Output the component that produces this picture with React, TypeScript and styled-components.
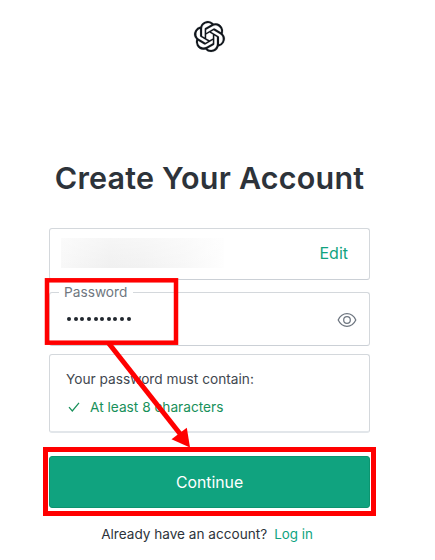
import React from 'react';
import styled, { createGlobalStyle } from 'styled-components';
import { SiOpenai } from 'react-icons/si';

const GlobalStyle = createGlobalStyle`
  * { box-sizing: border-box; }
  body { margin: 0; background: #fff; overflow: hidden; font-family: Inter, Arial, sans-serif; }
`;

const Page = styled.main`
  position: relative;
  width: 435px;
  height: 560px;
  padding: 21px 65px 0 49px;
  display: flex;
  flex-direction: column;
  align-items: stretch;
  color: #2d333a;
`;

const Logo = styled(SiOpenai)`
  align-self: center;
  width: 31px;
  height: 31px;
  color: #11161c;
  overflow: visible;

  path {
    stroke: currentColor;
    stroke-width: 0.1;
  }
`;

const Title = styled.h1`
  margin: 106px -10px 0;
  height: 40px;
  line-height: 40px;
  font-size: 30.5px;
  font-weight: 600;
  letter-spacing: 0.2px;
  text-align: center;
  white-space: nowrap;
`;

const Panel = styled.div`
  border: 1px solid #d4d8dc;
  border-bottom-color: #cbd0d6;
  border-radius: 3px;
`;

const EmailField = styled(Panel)`
  display: flex;
  align-items: center;
  justify-content: space-between;
  height: 52px;
  margin-top: 30px;
  padding: 0 21px 2px 11px;
`;

const HiddenAddress = styled.div`
  width: 163px;
  height: 30px;
  margin-top: -1px;
  background:
    linear-gradient(180deg, rgba(255, 255, 255, 0.4), rgba(255, 255, 255, 0)),
    linear-gradient(90deg, #f8f8f8, #f0f0f0 30%, #f2f2f2 50%, #f7f7f7 75%, #fefefe);
`;

const Link = styled.a<{ $size: number }>`
  color: #10a37f;
  font-size: ${(p) => p.$size}px;
`;

const PasswordField = styled.fieldset`
  display: flex;
  align-items: center;
  justify-content: space-between;
  min-width: 0;
  height: 62px;
  margin: 4px 0 0;
  padding: 6px 12px 0 17px;
  border: 1px solid #d4d8dc;
  border-bottom-color: #cbd0d6;
  border-radius: 3px;
`;

const Legend = styled.legend`
  margin-left: -8px;
  padding: 0 6px 0 5px;
  height: 16px;
  line-height: 16px;
  font-size: 13.7px;
  color: #6f7780;
`;

const Dots = styled.div`
  display: flex;
  gap: 2.65px;
  margin-top: 3px;
`;

const Dot = styled.i`
  width: 4px;
  height: 4px;
  border-radius: 50%;
  background: #20262e;
`;

const EyeIcon = styled.svg`
  width: 20px;
  height: 16px;
  margin-top: 6px;
  fill: none;
  stroke: #6e7680;
  stroke-width: 1.25;
`;

const Rules = styled(Panel)`
  height: 79px;
  margin-top: 8px;
  padding: 15px 16px 0;
  font-size: 13.7px;
  line-height: 18px;
  border-bottom: 2px solid #e2e6ea;
`;

const RulesTitle = styled.div`
  color: #41474f;
`;

const Rule = styled.div`
  display: flex;
  align-items: center;
  gap: 10px;
  margin-top: 10px;
  padding-left: 2px;
  color: #18905a;
`;

const CheckIcon = styled.svg`
  width: 12px;
  height: 12px;
  fill: none;
  stroke: currentColor;
  stroke-width: 1.25;
`;

const Submit = styled.button`
  height: 52px;
  margin-top: 23px;
  padding: 0;
  border: 1px solid #0c946f;
  border-radius: 3px;
  background: #10a37f;
  color: #fff;
  font: 400 15.8px Inter, Arial, sans-serif;
`;

const Footer = styled.footer`
  display: flex;
  justify-content: center;
  gap: 7px;
  margin: 17px 5px 0 0;
  font-size: 13.6px;
  line-height: 18px;
  white-space: nowrap;
`;

const Annotations = styled.svg`
  position: absolute;
  inset: 0;
  width: 435px;
  height: 560px;
  pointer-events: none;
  fill: none;
  stroke: #f00;
`;

export default function App() {
  return (
    <>
      <GlobalStyle />
      <Page>
        <Logo />
        <Title>Create Your Account</Title>
        <EmailField>
          <HiddenAddress />
          <Link $size={16}>Edit</Link>
        </EmailField>
        <PasswordField>
          <Legend>Password</Legend>
          <Dots>
            {Array.from({ length: 10 }, (_, i) => (
              <Dot key={i} />
            ))}
          </Dots>
          <EyeIcon viewBox="0 0 20 16">
            <path d="M1.2 8C5.2-.4 14.8-.4 18.8 8C14.8 16.4 5.2 16.4 1.2 8Z" />
            <circle cx="10" cy="8" r="3.3" />
          </EyeIcon>
        </PasswordField>
        <Rules>
          <RulesTitle>Your password must contain:</RulesTitle>
          <Rule>
            <CheckIcon viewBox="0 0 12 12">
              <path d="M1 6.2L4.3 10L11 1.8" />
            </CheckIcon>
            At least 8 characters
          </Rule>
        </Rules>
        <Submit>Continue</Submit>
        <Footer>
          <span>Already have an account?</span>
          <Link $size={13.4}>Log in</Link>
        </Footer>
        <Annotations viewBox="0 0 435 560">
          <rect x="47" y="280.3" width="129" height="62.4" strokeWidth="4.5" />
          <rect x="45.5" y="449.5" width="328" height="64" strokeWidth="5" />
          <path d="M108.5 343L181 435" strokeWidth="5" />
          <path d="M190 447.5L171.5 439.3L186.8 427.8Z" fill="#f00" stroke="none" />
        </Annotations>
      </Page>
    </>
  );
}
